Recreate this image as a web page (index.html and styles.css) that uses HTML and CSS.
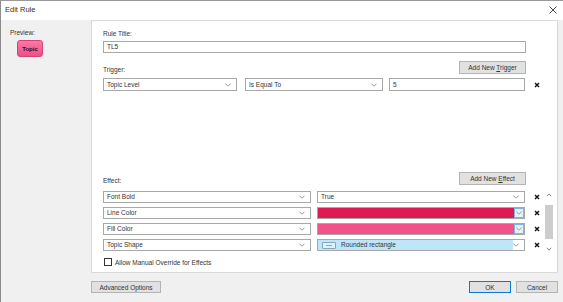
FILE: index.html
```
<!DOCTYPE html>
<html lang="en">
  <head>
    <meta charset="UTF-8" />
    <title>Edit Rule</title>
    <link rel="stylesheet" href="styles.css">
  </head>
  <body>
    <div class="window">
      <!-- Title bar -->
      <div class="titlebar">
        <span>Edit Rule</span>
        <svg class="close" width="8" height="8" viewBox="0 0 8 8"><path d="M0.5 0.5 L7.5 7.5 M7.5 0.5 L0.5 7.5" stroke="#333" stroke-width="0.9"/></svg>
      </div>

      <div class="main">
        <!-- Preview -->
        <div class="sidebar">
          <div class="label">Preview:</div>
          <div class="topic">Topic</div>
        </div>

        <!-- Rule panel -->
        <div class="panel">
          <div class="label">Rule Title:</div>
          <div class="input title-input">TL5</div>

          <div class="section-head">
            <div class="label">Trigger:</div>
            <div class="btn"><span>Add New <u>T</u>rigger</span></div>
          </div>
          <div class="row trigger-row">
            <div class="select w134">Topic Level<svg class="chev" viewBox="0 0 6 4"><path d="M0.5 0.8 L3 3.2 L5.5 0.8" fill="none" stroke="#777" stroke-width="0.7"/></svg></div>
            <div class="select w138">Is Equal To<svg class="chev" viewBox="0 0 6 4"><path d="M0.5 0.8 L3 3.2 L5.5 0.8" fill="none" stroke="#777" stroke-width="0.7"/></svg></div>
            <div class="input w136">5</div>
            <svg class="remove" viewBox="0 0 6 6"><path d="M1 1 L5 5 M5 1 L1 5" stroke="#111" stroke-width="1.4"/></svg>
          </div>

          <div class="section-head effect-head">
            <div class="label">Effect:</div>
            <div class="btn"><span>Add New <u>E</u>ffect</span></div>
          </div>
          <div class="effects">
            <div class="effect-rows">
              <div class="row">
                <div class="select w208">Font Bold<svg class="chev" viewBox="0 0 6 4"><path d="M0.5 0.8 L3 3.2 L5.5 0.8" fill="none" stroke="#777" stroke-width="0.7"/></svg></div>
                <div class="select w208">True<svg class="chev" viewBox="0 0 6 4"><path d="M0.5 0.8 L3 3.2 L5.5 0.8" fill="none" stroke="#777" stroke-width="0.7"/></svg></div>
                <svg class="remove" viewBox="0 0 6 6"><path d="M1 1 L5 5 M5 1 L1 5" stroke="#111" stroke-width="1.4"/></svg>
              </div>
              <div class="row">
                <div class="select w208">Line Color<svg class="chev" viewBox="0 0 6 4"><path d="M0.5 0.8 L3 3.2 L5.5 0.8" fill="none" stroke="#777" stroke-width="0.7"/></svg></div>
                <div class="select w208 color-select">
                  <div class="swatch line-color"></div>
                  <div class="drop"><svg class="chev" viewBox="0 0 6 4"><path d="M0.5 0.8 L3 3.2 L5.5 0.8" fill="none" stroke="#777" stroke-width="0.7"/></svg></div>
                </div>
                <svg class="remove" viewBox="0 0 6 6"><path d="M1 1 L5 5 M5 1 L1 5" stroke="#111" stroke-width="1.4"/></svg>
              </div>
              <div class="row">
                <div class="select w208">Fill Color<svg class="chev" viewBox="0 0 6 4"><path d="M0.5 0.8 L3 3.2 L5.5 0.8" fill="none" stroke="#777" stroke-width="0.7"/></svg></div>
                <div class="select w208 color-select">
                  <div class="swatch fill-color"></div>
                  <div class="drop"><svg class="chev" viewBox="0 0 6 4"><path d="M0.5 0.8 L3 3.2 L5.5 0.8" fill="none" stroke="#777" stroke-width="0.7"/></svg></div>
                </div>
                <svg class="remove" viewBox="0 0 6 6"><path d="M1 1 L5 5 M5 1 L1 5" stroke="#111" stroke-width="1.4"/></svg>
              </div>
              <div class="row">
                <div class="select w208">Topic Shape<svg class="chev" viewBox="0 0 6 4"><path d="M0.5 0.8 L3 3.2 L5.5 0.8" fill="none" stroke="#777" stroke-width="0.7"/></svg></div>
                <div class="select w208 shape-select">
                  <div class="shape-value"><span class="shape-icon"><span></span></span>Rounded rectangle</div>
                  <svg class="chev" viewBox="0 0 6 4"><path d="M0.5 0.8 L3 3.2 L5.5 0.8" fill="none" stroke="#777" stroke-width="0.7"/></svg>
                </div>
                <svg class="remove" viewBox="0 0 6 6"><path d="M1 1 L5 5 M5 1 L1 5" stroke="#111" stroke-width="1.4"/></svg>
              </div>
            </div>
            <div class="scrollbar">
              <svg class="arrow" viewBox="0 0 6 4"><path d="M0.8 3.2 L3 0.8 L5.2 3.2" fill="none" stroke="#666" stroke-width="0.8"/></svg>
              <div class="thumb"></div>
              <svg class="arrow" viewBox="0 0 6 4"><path d="M0.8 0.8 L3 3.2 L5.2 0.8" fill="none" stroke="#666" stroke-width="0.8"/></svg>
            </div>
          </div>

          <label class="check">
            <span class="box"></span>
            Allow Manual Override for Effects
          </label>
        </div>
      </div>

      <!-- Footer -->
      <div class="footer">
        <div class="btn adv">Advanced Options</div>
        <div class="footer-right">
          <div class="btn ok">OK</div>
          <div class="btn cancel">Cancel</div>
        </div>
      </div>
    </div>
  </body>
</html>
```

FILE: styles.css
```
* {
  box-sizing: border-box;
}

body {
  margin: 0;
  font-family: "Liberation Sans", Arial, sans-serif;
  font-size: 6.5px;
  color: #333;
  background: #f0f0f0;
}

.window {
  width: 563px;
  height: 302px;
  border-left: 1px solid #8c8c8c;
  border-top: 1px solid #9a9a9a;
  background: #f0f0f0;
  overflow: hidden;
}

.titlebar {
  height: 19px;
  background: #fff;
  display: flex;
  align-items: center;
  justify-content: space-between;
  padding: 0 6px 2px 4px;
  font-size: 7.5px;
}

.close {
  width: 8px;
  height: 8px;
}

.main {
  display: flex;
  height: 253px;
}

.sidebar {
  width: 90px;
  padding: 8px 0 0 9px;
}

.label {
  line-height: 9px;
}

.topic {
  margin: 3px 0 0 7px;
  width: 26px;
  height: 17px;
  border-radius: 3px;
  border: 1px solid #d84079;
  background: linear-gradient(#f77aa6, #ee4f87);
  font-weight: bold;
  font-size: 6px;
  color: #3a0a1c;
  display: flex;
  align-items: center;
  justify-content: center;
}

.panel {
  width: 467px;
  background: #fff;
  border: 1px solid #d9d9d9;
  padding: 8px 0 0 11px;
}

.input,
.select {
  height: 12px;
  border: 1px solid #a8a8a8;
  background: #fff;
  padding: 0 3px;
  display: flex;
  align-items: center;
  line-height: 10px;
}

.title-input {
  width: 423px;
  margin-top: 3px;
}

.section-head {
  width: 423px;
  margin-top: 8px;
  display: flex;
  align-items: center;
  justify-content: space-between;
}

.section-head .label {
  padding-top: 3px;
}

.effect-head {
  margin-top: 81px;
}

.btn {
  height: 13px;
  background: #e1e1e1;
  border: 1px solid #b4b4b4;
  display: flex;
  align-items: center;
  justify-content: center;
  font-size: 6.5px;
}

.section-head .btn {
  width: 67px;
}

.row {
  display: flex;
  align-items: center;
  gap: 6px;
  margin-bottom: 4px;
}

.trigger-row {
  margin-top: 4px;
}

.trigger-row .w138 {
  margin-left: 2px;
}

.trigger-row .select,
.trigger-row .input {
  height: 13px;
}

.w134 { width: 134px; }
.w136 { width: 136px; }
.w138 { width: 138px; }
.w208 { width: 208px; }

.select {
  justify-content: space-between;
  padding-right: 5px;
}

.chev {
  width: 6px;
  height: 4px;
  flex: none;
}

.remove {
  width: 6px;
  height: 6px;
  margin-left: 3px;
}

.effects {
  display: flex;
  margin-top: 6px;
}

.effect-rows {
  width: 441px;
}

.color-select {
  padding: 0;
  border-color: #a8a8a8;
}

.swatch {
  flex: 1;
  height: 100%;
}

.line-color {
  background: #dc1b55;
}

.fill-color {
  background: #f3518a;
}

.drop {
  width: 10px;
  height: 100%;
  border: 1px solid #7eb4ea;
  background: #e5f1fb;
  display: flex;
  align-items: center;
  justify-content: center;
}

.shape-select {
  padding: 0 5px 0 0;
}

.shape-value {
  height: 100%;
  width: 197px;
  background: #bfe5fb;
  display: flex;
  align-items: center;
  gap: 5px;
  padding-left: 4px;
}

.shape-icon {
  width: 14px;
  height: 7px;
  border: 1px solid #7fa7c0;
  border-radius: 1px;
  background: #dff2fd;
  display: flex;
  align-items: center;
  justify-content: center;
}

.shape-icon span {
  width: 6px;
  height: 1px;
  background: #7fa7c0;
}

.scrollbar {
  width: 10px;
  height: 62px;
  display: flex;
  flex-direction: column;
  align-items: center;
  justify-content: space-between;
  padding: 2px 0;
}

.arrow {
  width: 6px;
  height: 4px;
}

.thumb {
  width: 8px;
  height: 34px;
  background: #cdcdcd;
}

.check {
  display: flex;
  align-items: center;
  gap: 3px;
  margin-top: 3px;
  padding-left: 1px;
}

.box {
  width: 8px;
  height: 8px;
  border: 1px solid #333;
  background: #fff;
}

.footer {
  height: 29px;
  display: flex;
  align-items: center;
  justify-content: space-between;
  padding: 0 5px 1px 90px;
}

.footer .btn {
  height: 12px;
}

.adv {
  width: 70px;
}

.footer-right {
  display: flex;
  gap: 5px;
}

.ok,
.cancel {
  width: 42px;
}

.ok {
  border: 1px solid #0a78d7;
}
```
